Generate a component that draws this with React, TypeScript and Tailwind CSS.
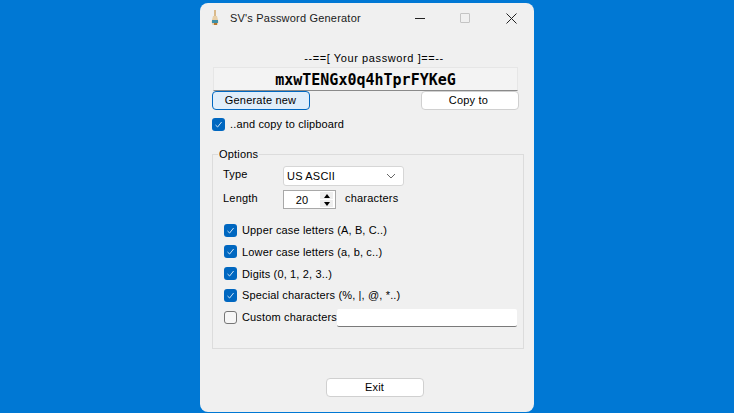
const ui = { fontFamily: '"Liberation Sans", Arial, sans-serif' };

function Check({ checked, label }: { checked: boolean; label: string }) {
  return (
    <label className="flex items-center gap-[5px] h-[14px] text-[11px] leading-[14px] tracking-[0.15px] text-black whitespace-nowrap">
      <span
        className={
          checked
            ? "flex h-[13px] w-[13px] items-center justify-center rounded-[3px] bg-[#0067c0]"
            : "flex h-[13px] w-[13px] items-center justify-center rounded-[3px] border border-[#767676] bg-[#f6f6f6]"
        }
      >
        {checked && (
          <svg width="9" height="9" viewBox="0 0 9 9" fill="none">
            <path d="M1.5 5 L3.6 7 L7.6 2" stroke="#cfe4f7" strokeWidth="1" />
          </svg>
        )}
      </span>
      {label}
    </label>
  );
}

function Button({ label, className }: { label: string; className: string }) {
  return (
    <button className={`flex items-center justify-center rounded-[4px] text-[11px] tracking-[0.2px] text-black ${className}`}>
      {label}
    </button>
  );
}

export default function App() {
  return (
    <div className="flex h-[413px] w-[734px] justify-center overflow-hidden bg-[#0078d4] pt-[3px]" style={ui}>
      <div className="flex h-[409px] w-[334px] flex-col rounded-[8px] bg-[#f0f0f0]">
        {/* title bar */}
        <div className="flex h-[30px] shrink-0 items-center text-[#1a1a1a]">
          <svg className="ml-[10px] mr-[10px]" width="10" height="17" viewBox="0 0 10 17">
            <rect x="4" y="0" width="2" height="6" fill="#d9b98a" />
            <path d="M3 6 h4 l1.5 6 l-1 3 h-5 l-1 -3 z" fill="#e8cfa8" />
            <rect x="2" y="10" width="6" height="3" fill="#3f8fa8" />
            <rect x="4" y="13" width="3" height="2" fill="#b5772f" />
          </svg>
          <span className="text-[11px] tracking-[0.2px]">SV's Password Generator</span>
          <div className="ml-auto flex items-center">
            <div className="h-px w-[10px] bg-[#222]" />
            <div className="ml-[35px] h-[10px] w-[10px] rounded-[1px] border border-[#c4c4c4]" />
            <svg className="ml-[36px] mr-[17px]" width="11" height="11" viewBox="0 0 11 11">
              <path d="M0.5 0.5 L10.5 10.5 M10.5 0.5 L0.5 10.5" stroke="#222" strokeWidth="1" />
            </svg>
          </div>
        </div>

        <div className="flex flex-1 flex-col pl-[12px] pr-[10px]">
          <p className="mt-[18px] w-[324px] text-center text-[11px] leading-[14px] tracking-[0.6px] text-black">
            --==[ Your password ]==--
          </p>
          {/* password field */}
          <div
            className="mt-[2px] ml-px flex h-[24px] w-[305px] items-center justify-center border border-[#e6e6e6] border-b-[#8a8a8a] bg-[#f3f3f3] pt-[2px] text-[15px] font-bold text-black"
            style={{ fontFamily: '"DejaVu Sans Mono", monospace' }}
          >
            mxwTENGx0q4hTprFYKeG
          </div>
          <div className="flex w-[307px] justify-between">
            <Button label="Generate new" className="h-[19px] w-[98px] border border-[#0067c0] bg-[#e1eefa] pr-px" />
            <Button label="Copy to" className="h-[19px] w-[98px] border border-[#d0d0d0] bg-white pr-[3px]" />
          </div>
          <div className="mt-[7px]">
            <Check checked label="..and copy to clipboard" />
          </div>

          {/* options */}
          <fieldset className="mt-[16px] h-[202px] w-[312px] border border-[#dcdcdc] pl-[9px]">
            <legend className="-ml-[4px] px-px text-[11px] leading-[14px] tracking-[0.2px] text-black">Options</legend>
            <div className="mt-[5px] flex items-center">
              <span className="mb-[4px] w-[61px] pl-px text-[11px] tracking-[0.2px] text-black">Type</span>
              <div className="flex h-[20px] w-[121px] items-center justify-between rounded-[3px] border border-[#d6d6d6] bg-white pl-[3px] pr-[7px] text-[11px] tracking-[0.2px] text-black">
                US ASCII
                <svg width="10" height="6" viewBox="0 0 10 6" fill="none">
                  <path d="M1 1 L5 5 L9 1" stroke="#666" strokeWidth="1" />
                </svg>
              </div>
            </div>
            <div className="mt-[3px] flex items-center">
              <span className="mb-[4px] w-[61px] pl-px text-[11px] tracking-[0.2px] text-black">Length</span>
              <div className="flex h-[19px] w-[53px] items-center border border-[#a8a8a8] bg-white">
                <span className="w-[36px] text-center text-[11px] tracking-[0.2px] text-black">20</span>
                <div className="flex flex-col gap-px">
                  <div className="flex h-[7px] w-[13px] items-center justify-center bg-[#eeeeee]">
                    <div className="border-x-[3px] border-b-[4px] border-x-transparent border-b-black" />
                  </div>
                  <div className="flex h-[7px] w-[13px] items-center justify-center bg-[#eeeeee]">
                    <div className="border-x-[3px] border-t-[4px] border-x-transparent border-t-black" />
                  </div>
                </div>
              </div>
              <span className="mb-[4px] ml-[9px] text-[11px] tracking-[0.2px] text-black">characters</span>
            </div>
            <div className="ml-[2px] mt-[13px] flex flex-col gap-[7.75px]">
              <Check checked label="Upper case letters (A, B, C..)" />
              <Check checked label="Lower case letters (a, b, c..)" />
              <Check checked label="Digits (0, 1, 2, 3..)" />
              <Check checked label="Special characters (%, |, @, *..)" />
              <div className="flex h-[14px] items-center">
                <div className="w-[113px]">
                  <Check checked={false} label="Custom characters" />
                </div>
                <div className="mt-[2px] h-[18px] w-[180px] shrink-0 rounded-[2px] border-b border-b-[#7a7a7a] bg-white" />
              </div>
            </div>
          </fieldset>

          <Button label="Exit" className="ml-[114px] mt-[29px] h-[19px] w-[98px] border border-[#d0d0d0] bg-white pr-px" />
        </div>
      </div>
    </div>
  );
}
